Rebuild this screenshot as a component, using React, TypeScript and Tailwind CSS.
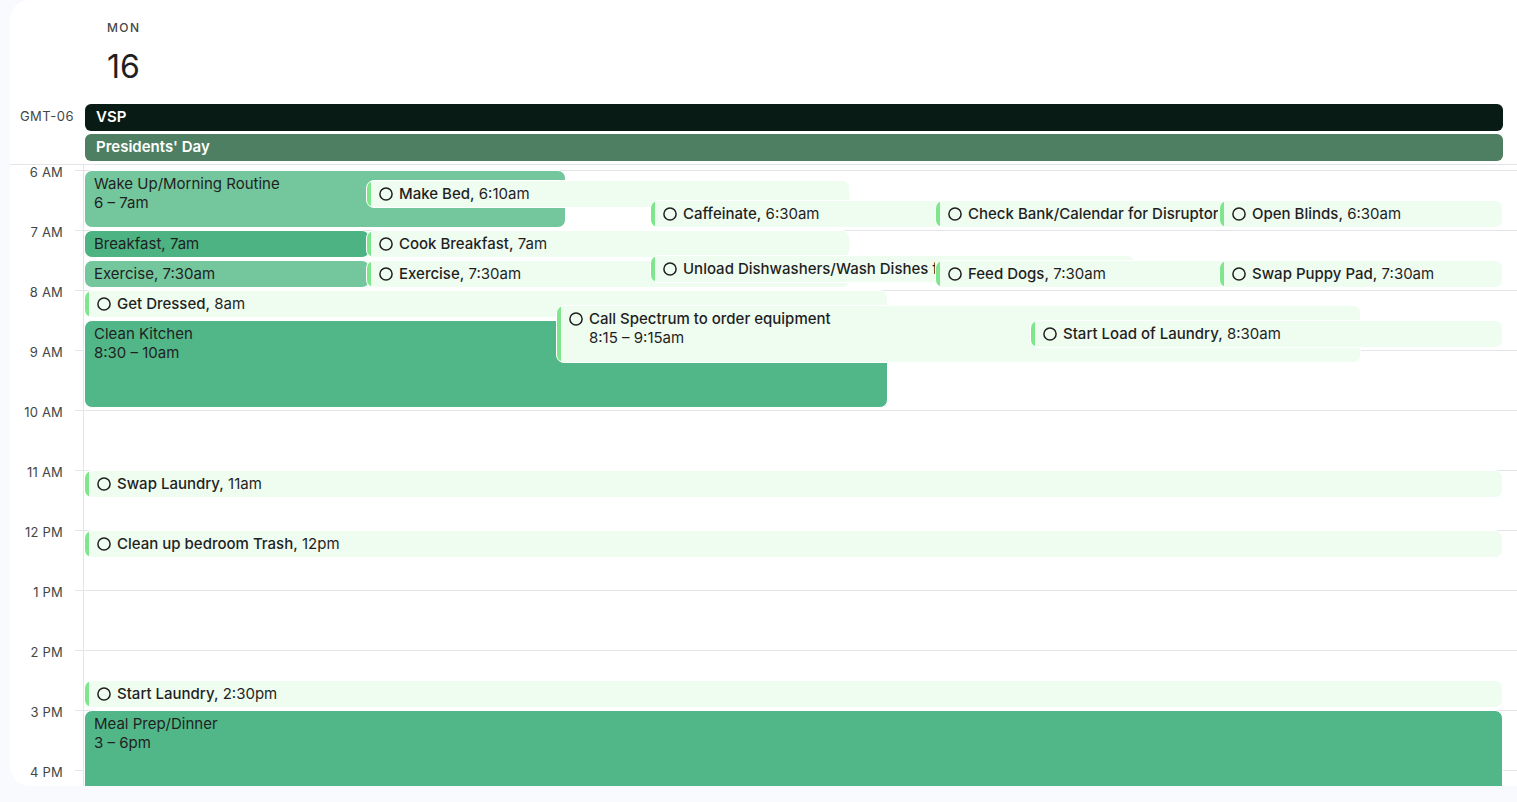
import React from "react";

type Item = {
  kind: "event" | "task";
  title: string;
  time?: string;
  start: number;
  end: number;
  left: number;
  width: number;
  color?: string;
  twoLine?: boolean;
  visible?: number; // width of the part not covered by a later box
};

const hours = ["6 AM", "7 AM", "8 AM", "9 AM", "10 AM", "11 AM", "12 PM", "1 PM", "2 PM", "3 PM", "4 PM"];

const t = (h: number, m = 0) => h * 60 + m;

// order matters: later items sit on top of earlier ones
const items: Item[] = [
  { kind: "event", title: "Wake Up/Morning Routine", time: "6 – 7am", start: t(6), end: t(7), left: 0, width: 482, color: "#74c69d", twoLine: true, visible: 282 },
  { kind: "task", title: "Make Bed", time: "6:10am", start: t(6, 10), end: t(6, 40), left: 282, width: 484 },
  { kind: "task", title: "Caffeinate", time: "6:30am", start: t(6, 30), end: t(7), left: 566, width: 485, visible: 285 },
  { kind: "task", title: "Check Bank/Calendar for Disruptor", start: t(6, 30), end: t(7), left: 851, width: 484, visible: 284 },
  { kind: "task", title: "Open Blinds", time: "6:30am", start: t(6, 30), end: t(7), left: 1135, width: 284 },
  { kind: "event", title: "Breakfast", time: "7am", start: t(7), end: t(7, 30), left: 0, width: 286, color: "#4db383", visible: 282 },
  { kind: "task", title: "Cook Breakfast", time: "7am", start: t(7), end: t(7, 30), left: 282, width: 484 },
  { kind: "event", title: "Exercise", time: "7:30am", start: t(7, 30), end: t(8), left: 0, width: 286, color: "#74c69d", visible: 282 },
  { kind: "task", title: "Exercise", time: "7:30am", start: t(7, 30), end: t(8), left: 282, width: 484, visible: 284 },
  { kind: "task", title: "Unload Dishwashers/Wash Dishes f", start: t(7, 25), end: t(7, 55), left: 566, width: 485, visible: 286 },
  { kind: "task", title: "Feed Dogs", time: "7:30am", start: t(7, 30), end: t(8), left: 851, width: 484, visible: 284 },
  { kind: "task", title: "Swap Puppy Pad", time: "7:30am", start: t(7, 30), end: t(8), left: 1135, width: 284 },
  { kind: "task", title: "Get Dressed", time: "8am", start: t(8), end: t(8, 30), left: 0, width: 804, visible: 472 },
  { kind: "event", title: "Clean Kitchen", time: "8:30 – 10am", start: t(8, 30), end: t(10), left: 0, width: 804, color: "#52b788", twoLine: true, visible: 472 },
  { kind: "task", title: "Call Spectrum to order equipment", time: "8:15 – 9:15am", start: t(8, 15), end: t(9, 15), left: 472, width: 805, twoLine: true, visible: 474 },
  { kind: "task", title: "Start Load of Laundry", time: "8:30am", start: t(8, 30), end: t(9), left: 946, width: 473 },
  { kind: "task", title: "Swap Laundry", time: "11am", start: t(11), end: t(11, 30), left: 0, width: 1419 },
  { kind: "task", title: "Clean up bedroom Trash", time: "12pm", start: t(12), end: t(12, 30), left: 0, width: 1419 },
  { kind: "task", title: "Start Laundry", time: "2:30pm", start: t(14, 30), end: t(15), left: 0, width: 1419 },
  { kind: "event", title: "Meal Prep/Dinner", time: "3 – 6pm", start: t(15), end: t(18), left: 0, width: 1419, color: "#52b788", twoLine: true },
];

function TaskCircle() {
  return (
    <svg width="14" height="14" viewBox="0 0 14 14" className="shrink-0">
      <circle cx="7" cy="7" r="6.1" fill="none" stroke="#1f1f1f" strokeWidth="1.5" />
    </svg>
  );
}

function CalendarItem({ item }: { item: Item }) {
  const style = {
    top: item.start - t(6) + 5,
    left: item.left,
    width: item.width,
    height: item.end - item.start - 2,
  };
  const clip = item.visible ? { maxWidth: item.visible - 14 } : undefined;

  if (item.kind === "event") {
    return (
      <div
        className="absolute overflow-hidden whitespace-nowrap rounded-[8px] border border-white px-[9px] pt-[3px] text-[15px] leading-[19px] text-[#1f1f1f]"
        style={{ ...style, backgroundColor: item.color }}
      >
        <div className="overflow-hidden" style={clip}>
          {item.twoLine ? (
            <>
              <div>{item.title}</div>
              <div>{item.time}</div>
            </>
          ) : (
            <div>
              {item.title}, {item.time}
            </div>
          )}
        </div>
      </div>
    );
  }

  return (
    <div
      className="absolute overflow-hidden whitespace-nowrap rounded-[8px] border border-white bg-[#effcf0] pl-[12px] pt-[3px] text-[15px] leading-[19px] text-[#1f1f1f]"
      style={style}
    >
      <div className="absolute inset-y-0 left-0 w-[4px] bg-[#80e68e]" />
      <div className="overflow-hidden" style={clip}>
        <div className="flex items-center gap-[6px]">
          <TaskCircle />
          {item.twoLine || !item.time ? (
            <span className="font-medium">{item.title}</span>
          ) : (
            <span>
              <span className="font-medium">{item.title},</span> {item.time}
            </span>
          )}
        </div>
        {item.twoLine && <div className="pl-[20px]">{item.time}</div>}
      </div>
    </div>
  );
}

export default function App() {
  return (
    <div className="h-[802px] overflow-hidden bg-[#f8fafd] pl-[10px] font-['Inter',_'Liberation_Sans',_sans-serif]">
      <div className="flex h-[786px] flex-col overflow-hidden rounded-l-[20px] bg-white">
        {/* day header */}
        <div className="h-[104px] shrink-0 pl-[97px] pt-[20px]">
          <div className="text-[12px] font-medium leading-[16px] tracking-[1.4px] text-[#444746]">MON</div>
          <div className="mt-[11px] text-[32px] leading-[40px] text-[#1f1f1f]">16</div>
        </div>

        {/* all-day row */}
        <div className="flex shrink-0 border-b border-[#e3e5e8] pb-[3px]">
          <div className="w-[74px] shrink-0 pr-[10px] text-right text-[13px] leading-[25px] tracking-[0.5px] text-[#444746]">GMT-06</div>
          <div className="ml-[1px] mr-[14px] flex flex-1 flex-col gap-[3px]">
            <div className="flex h-[27px] items-center rounded-[6px] bg-[#081c15] px-[11px] text-[15px] font-semibold text-white">VSP</div>
            <div className="flex h-[27px] items-center rounded-[6px] bg-[#4e7f63] px-[11px] text-[15px] font-semibold text-white">Presidents' Day</div>
          </div>
        </div>

        {/* time grid */}
        <div className="relative flex-1">
          <div className="pt-[5px]">
            {hours.map((h) => (
              <div key={h} className="flex h-[60px]">
                <div className="relative w-[65px] shrink-0">
                  <span className="absolute -top-[6px] right-[12px] whitespace-nowrap text-[13px] leading-[16px] tracking-[0.2px] text-[#444746]">{h}</span>
                </div>
                <div className="flex-1 border-t border-[#e3e5e8]" />
              </div>
            ))}
          </div>
          <div className="absolute inset-y-0 left-[73px] right-[14px] border-l border-[#e3e5e8]">
            {items.map((item, i) => (
              <CalendarItem key={i} item={item} />
            ))}
          </div>
        </div>
      </div>
    </div>
  );
}
